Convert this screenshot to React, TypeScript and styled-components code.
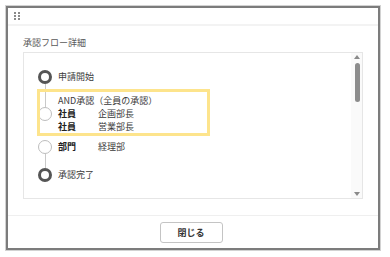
import React from 'react';
import styled, { createGlobalStyle } from 'styled-components';

const Global = createGlobalStyle`
  html, body { margin: 0; padding: 0; background: #fff; }
  body { font-family: "Noto Sans CJK JP", "Noto Sans", sans-serif; color: #333; }
  * { box-sizing: border-box; }
`;

const Page = styled.div`
  padding: 5px 0 0 5px;
`;

const Frame = styled.div`
  width: 376px;
  height: 246px;
  border: 1px solid #d2d2d2;
  display: flex;
`;

const Dialog = styled.div`
  flex: 1;
  border: 2px solid #7c7c7c;
  background: #fff;
  display: flex;
  flex-direction: column;
`;

const Header = styled.div`
  height: 18px;
  border-bottom: 2px solid #f3f3f3;
  padding-left: 6px;
  display: flex;
  align-items: center;
`;

const Body = styled.div`
  padding: 10px 15px 16px 15px;
  display: flex;
  flex-direction: column;
`;

const Title = styled.div`
  font-size: 9px;
  line-height: 14px;
  height: 14px;
  color: #5a5a5a;
`;

const Box = styled.div`
  margin-top: 2px;
  height: 147px;
  border: 1px solid #e6e6e6;
  display: flex;
`;

const Scroll = styled.div`
  flex: 1;
  padding: 12px 0 0 13px;
  display: flex;
  flex-direction: column;
`;

const Track = styled.div`
  width: 11px;
  background: #fafafa;
  display: flex;
  flex-direction: column;
  align-items: center;
  padding: 2px 0 2px 1px;
`;

const Arrow = styled.div<{ $down?: boolean }>`
  width: 0;
  height: 0;
  border-left: 3px solid transparent;
  border-right: 3px solid transparent;
  ${(p) => (p.$down ? 'border-top: 4px solid #8a8a8a;' : 'border-bottom: 4px solid #8a8a8a;')}
`;

const Thumb = styled.div`
  margin-top: 4px;
  width: 5px;
  height: 39px;
  border-radius: 3px;
  background: #8c8c8c;
`;

const Spacer = styled.div`
  flex: 1;
`;

const Step = styled.div<{ $hl?: boolean }>`
  width: 173px;
  display: flex;
  align-items: stretch;
  ${(p) => (p.$hl ? 'outline: 3px solid #fde48c; outline-offset: -3px;' : '')}
`;

const Marker = styled.div`
  width: 14px;
  margin-left: 1px;
  display: flex;
  flex-direction: column;
  align-items: center;
`;

const Line = styled.div<{ $h?: number; $show: boolean }>`
  width: 1px;
  ${(p) => (p.$h !== undefined ? `height: ${p.$h}px;` : 'flex: 1;')}
  background: ${(p) => (p.$show ? '#c9c9c9' : 'transparent')};
`;

const Dot = styled.div<{ $bold?: boolean }>`
  width: 14px;
  height: 14px;
  border-radius: 50%;
  background: #fff;
  border: ${(p) => (p.$bold ? '3px solid #555' : '1px solid #bdbdbd')};
`;

const Content = styled.div<{ $pt: number; $pb: number }>`
  margin-left: 6px;
  padding-top: ${(p) => p.$pt}px;
  padding-bottom: ${(p) => p.$pb}px;
  font-size: 9px;
  color: #3a3a3a;
`;

const Text = styled.div<{ $lh?: number }>`
  line-height: ${(p) => p.$lh ?? 14}px;
  white-space: nowrap;
`;

const Row = styled.div<{ $lh?: number }>`
  display: grid;
  grid-template-columns: 40px auto;
  line-height: ${(p) => p.$lh ?? 14}px;
  white-space: nowrap;
`;

const Label = styled.span`
  font-weight: 700;
  color: #222;
`;

const Footer = styled.div`
  flex: 1;
  border-top: 1px solid #efefef;
  display: flex;
  align-items: center;
  justify-content: center;
  padding-right: 4px;
`;

const Button = styled.button`
  width: 63px;
  height: 21px;
  border: 1px solid #c4c4c4;
  border-radius: 3px;
  background: #fff;
  font-family: "Noto Sans CJK JP", "Noto Sans", sans-serif;
  font-size: 9px;
  font-weight: 700;
  color: #333;
  padding: 0;
`;

const Grip = () => (
  <svg width="6" height="8" viewBox="0 0 6 8">
    {[0, 3, 6].map((y) =>
      [0, 4].map((x) => <rect key={`${x}-${y}`} x={x} y={y} width="2" height="2" fill="#8a8a8a" />)
    )}
  </svg>
);

export default function App() {
  return (
    <>
      <Global />
      <Page>
        <Frame>
          <Dialog>
            <Header>
              <Grip />
            </Header>
            <Body>
              <Title>承認フロー詳細</Title>
              <Box>
                <Scroll>
                  <Step>
                    <Marker>
                      <Line $h={5} $show={false} />
                      <Dot $bold />
                      <Line $show />
                    </Marker>
                    <Content $pt={5} $pb={5}>
                      <Text>申請開始</Text>
                    </Content>
                  </Step>
                  <Step $hl>
                    <Marker>
                      <Line $h={18} $show />
                      <Dot />
                      <Line $show={false} />
                    </Marker>
                    <Content $pt={5} $pb={3}>
                      <Text $lh={13}>AND承認（全員の承認）</Text>
                      <Row $lh={13}>
                        <Label>社員</Label>
                        <span>企画部長</span>
                      </Row>
                      <Row $lh={13}>
                        <Label>社員</Label>
                        <span>営業部長</span>
                      </Row>
                    </Content>
                  </Step>
                  <Step>
                    <Marker>
                      <Line $h={4} $show={false} />
                      <Dot />
                      <Line $show />
                    </Marker>
                    <Content $pt={4} $pb={6}>
                      <Row>
                        <Label>部門</Label>
                        <span>経理部</span>
                      </Row>
                    </Content>
                  </Step>
                  <Step>
                    <Marker>
                      <Line $h={8} $show />
                      <Dot $bold />
                      <Line $show={false} />
                    </Marker>
                    <Content $pt={8} $pb={0}>
                      <Text>承認完了</Text>
                    </Content>
                  </Step>
                </Scroll>
                <Track>
                  <Arrow />
                  <Thumb />
                  <Spacer />
                  <Arrow $down />
                </Track>
              </Box>
            </Body>
            <Footer>
              <Button>閉じる</Button>
            </Footer>
          </Dialog>
        </Frame>
      </Page>
    </>
  );
}
